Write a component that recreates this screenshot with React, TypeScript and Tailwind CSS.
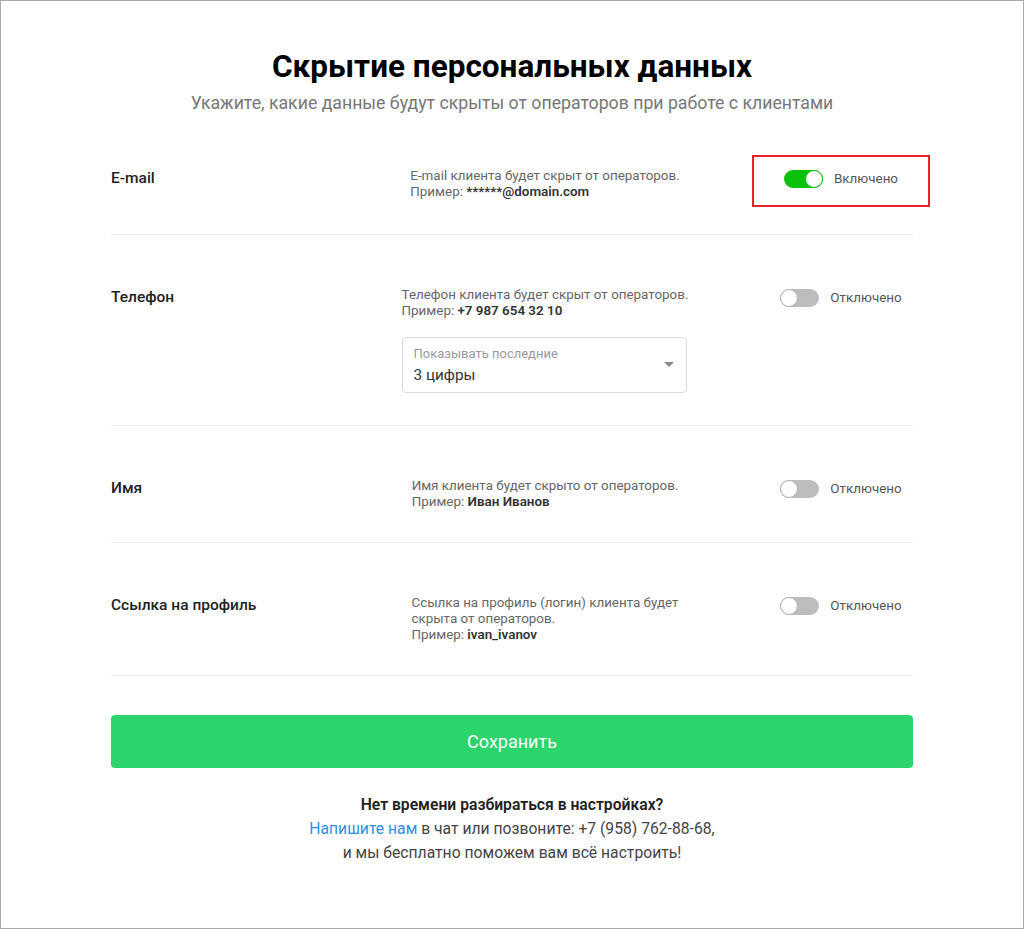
import { FC, ReactNode, useState } from 'react';

interface ToggleProps {
  on: boolean;
  onChange: () => void;
  highlight?: boolean;
}

const Toggle: FC<ToggleProps> = ({ on, onChange, highlight }) => (
  <div className="relative mt-[1px] flex items-center">
    {highlight && (
      <span className="pointer-events-none absolute -top-[14px] -bottom-[18px] -left-[32px] -right-[32px] border-2 border-[#e8212c]" />
    )}
    <button
      type="button"
      onClick={onChange}
      className={`relative h-[18px] w-[39px] rounded-full ${on ? 'bg-[#0cc10c]' : 'bg-[#bdbdbd]'}`}
    >
      <span
        className={`absolute top-0 h-[18px] w-[18px] rounded-full border bg-white ${
          on ? 'right-0 border-[#0cc10c]' : 'left-0 border-[#b0b0b0]'
        }`}
      />
    </button>
    <span className="ml-[11px] text-[13.4px] text-[#555]">{on ? 'Включено' : 'Отключено'}</span>
  </div>
);

interface RowProps {
  label: string;
  on: boolean;
  onChange: () => void;
  highlight?: boolean;
  first?: boolean;
  children: ReactNode;
}

const Row: FC<RowProps> = ({ label, on, onChange, highlight, first, children }) => (
  <div
    className={`grid grid-cols-[250px_368px_1fr] items-start border-b border-[#ececec] ${
      first ? 'pt-[53px] pb-[34px]' : 'pt-[52px] pb-[32px]'
    }`}
  >
    <div className="text-[15.5px] leading-5 font-medium text-[#222]">{label}</div>
    <div className="flex justify-center">
      <div className="text-[13.4px] leading-4 text-[#666]">{children}</div>
    </div>
    <div className="flex justify-center pl-10">
      <Toggle on={on} onChange={onChange} highlight={highlight} />
    </div>
  </div>
);

export default function App() {
  const [state, setState] = useState({ email: true, phone: false, name: false, link: false });
  const flip = (key: keyof typeof state) => setState(prev => ({ ...prev, [key]: !prev[key] }));

  return (
    <div className="min-h-[929px] border border-[#a9a9a9] bg-white font-['Roboto',sans-serif]">
      <div className="mx-auto w-[802px] pt-[48px]">
        <h1 className="text-center text-[31.5px] leading-9 font-bold text-black">Скрытие персональных данных</h1>
        <p className="mt-[6px] text-center text-[17.7px] leading-6 text-[#777]">
          Укажите, какие данные будут скрыты от операторов при работе с клиентами
        </p>

        <Row label="E-mail" on={state.email} onChange={() => flip('email')} highlight first>
          <p>E-mail клиента будет скрыт от операторов.</p>
          <p>
            Пример: <b className="font-semibold text-[#333]">******@domain.com</b>
          </p>
        </Row>

        <Row label="Телефон" on={state.phone} onChange={() => flip('phone')}>
          <p>Телефон клиента будет скрыт от операторов.</p>
          <p>
            Пример: <b className="font-semibold text-[#333]">+7 987 654 32 10</b>
          </p>
          <div className="mt-[18px] flex h-[56px] w-[285px] items-center justify-between rounded-[4px] border border-[#dcdcdc] px-[11px]">
            <div>
              <div className="text-[13px] leading-4 text-[#9a9a9a]">Показывать последние</div>
              <div className="mt-[3px] text-[15.3px] leading-5 text-[#333]">3 цифры</div>
            </div>
            <svg width="10" height="6" viewBox="0 0 10 6" className="mr-[1px]">
              <path d="M0 0h10L5 5z" fill="#8a8a8a" />
            </svg>
          </div>
        </Row>

        <Row label="Имя" on={state.name} onChange={() => flip('name')}>
          <p>Имя клиента будет скрыто от операторов.</p>
          <p>
            Пример: <b className="font-semibold text-[#333]">Иван Иванов</b>
          </p>
        </Row>

        <Row label="Ссылка на профиль" on={state.link} onChange={() => flip('link')}>
          <p>Ссылка на профиль (логин) клиента будет</p>
          <p>скрыта от операторов.</p>
          <p>
            Пример: <b className="font-semibold text-[#333]">ivan_ivanov</b>
          </p>
        </Row>

        <button
          type="button"
          className="mt-[39px] h-[53px] w-full rounded-[4px] bg-[#2bd56b] text-[18px] text-white"
        >
          Сохранить
        </button>

        <div className="mt-[25px] text-center text-[15.7px] leading-6 text-[#444]">
          <p className="font-semibold text-[#222]">Нет времени разбираться в настройках?</p>
          <p>
            <a href="#" className="text-[#2e8fe6]">Напишите нам</a> в чат или позвоните: +7 (958) 762-88-68,
          </p>
          <p>и мы бесплатно поможем вам всё настроить!</p>
        </div>
      </div>
    </div>
  );
}
